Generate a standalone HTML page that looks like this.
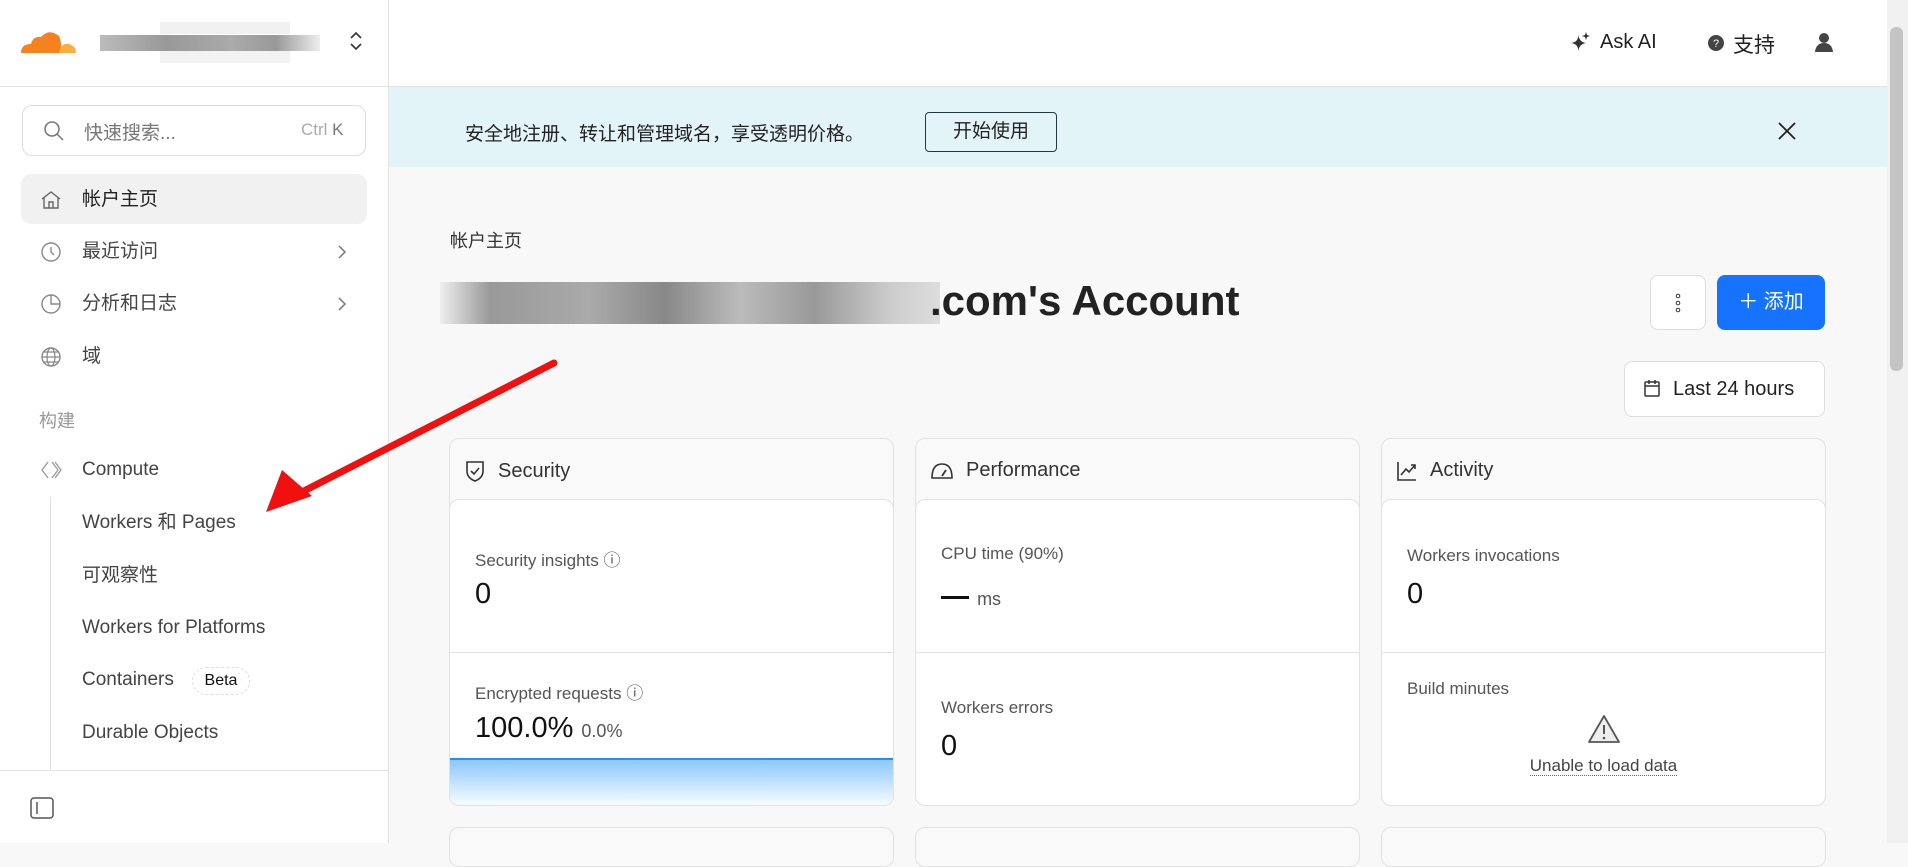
<!DOCTYPE html>
<html><head><meta charset="utf-8">
<style>
*{box-sizing:border-box;margin:0;padding:0}
body{width:1908px;height:843px;overflow:hidden;background:#f8f8f8;font-family:"Liberation Sans","Noto Sans CJK SC",sans-serif;color:#222;position:relative}
.abs{position:absolute}
#side{left:0;top:0;width:389px;height:843px;background:#fff;border-right:1px solid #e3e3e3}
#top{left:389px;top:0;width:1498px;height:87px;background:#fff;border-bottom:1px solid #e3e3e3}
.nav{position:absolute;left:82px;font-size:19px;color:#444;line-height:24px}
.ico{position:absolute;left:40px}
.card{position:absolute;top:438px;width:445px;height:368px;background:#f9f9f9;border:1px solid #e2e2e2;border-radius:10px}
.card .h{position:absolute;left:14px;top:20px;font-size:20px;color:#333;display:flex;align-items:center;gap:12px}
.card .b{position:absolute;left:-1px;right:-1px;top:60px;bottom:-1px;background:#fff;border:1px solid #e2e2e2;border-radius:10px;overflow:hidden}
.lbl{position:absolute;left:25px;font-size:17px;color:#555}
.num{position:absolute;left:25px;font-size:29px;color:#111}
.div{position:absolute;left:0;right:0;top:152px;border-top:1px solid #e2e2e2}
.card2{position:absolute;top:827px;width:445px;height:40px;background:#f9f9f9;border:1px solid #e2e2e2;border-radius:10px}
</style></head><body>
<div id="side" class="abs">
  <svg class="abs" style="left:19px;top:28px" width="58" height="28" viewBox="0 0 58 28"><path d="M2 25 Q2 16 12 16 Q14 8 22 9 Q30 0 40 8 Q43 14 42 25Z" fill="#f6821f"/><path d="M40 25 Q42 14 50 16 Q57 18 57 25Z" fill="#fbad41"/></svg>
  <div class="abs" style="left:100px;top:35px;width:220px;height:16px;background:linear-gradient(90deg,#bbb,#999 30%,#aaa 60%,#999 80%,#eee)"></div>
  <div class="abs" style="left:160px;top:22px;width:130px;height:12px;background:#f0f0f0"></div>
  <div class="abs" style="left:160px;top:51px;width:130px;height:12px;background:#f2f2f2"></div>
  <svg class="abs" style="left:348px;top:30px" width="16" height="22" viewBox="0 0 16 22"><path d="M3 8l5-5 5 5M3 14l5 5 5-5" fill="none" stroke="#333" stroke-width="1.6"/></svg>
  <div class="abs" style="left:0;top:86px;width:389px;border-top:1px solid #e3e3e3"></div>
  <div class="abs" style="left:22px;top:105px;width:344px;height:51px;border:1.5px solid #ddd;border-radius:10px"></div>
  <svg class="abs" style="left:43px;top:120px" width="22" height="22" viewBox="0 0 22 22"><circle cx="9" cy="9" r="7" fill="none" stroke="#777" stroke-width="1.5"/><path d="M14 14l6 6" stroke="#777" stroke-width="1.5"/></svg>
  <div class="abs" style="left:84px;top:118px;font-size:19px;color:#777">快速搜索...</div>
  <div class="abs" style="left:301px;top:120px;font-size:17px;color:#aaa">Ctrl <span style="color:#777">K</span></div>
  <div class="abs" style="left:21px;top:174px;width:346px;height:50px;background:#f1f1f1;border-radius:10px"></div>
  <svg class="ico" style="top:189px" width="22" height="22" viewBox="0 0 22 22"><path d="M2 10L11 3l9 7M4 9v10h14V9M9 19v-6h4v6" fill="none" stroke="#666" stroke-width="1.4"/></svg>
  <div class="nav" style="top:188px;color:#222">帐户主页</div>
  <svg class="ico" style="top:241px" width="22" height="22" viewBox="0 0 22 22"><circle cx="11" cy="11" r="9" fill="none" stroke="#888" stroke-width="1.4"/><path d="M11 6v5l3 3" fill="none" stroke="#888" stroke-width="1.4"/></svg>
  <div class="nav" style="top:240px">最近访问</div>
  <svg class="abs" style="left:336px;top:244px" width="12" height="16"><path d="M3 2l6 6-6 6" fill="none" stroke="#777" stroke-width="1.5"/></svg>
  <svg class="ico" style="top:293px" width="22" height="22" viewBox="0 0 22 22"><circle cx="11" cy="11" r="9" fill="none" stroke="#888" stroke-width="1.4"/><path d="M11 2v9h9" fill="none" stroke="#888" stroke-width="1.4"/></svg>
  <div class="nav" style="top:292px">分析和日志</div>
  <svg class="abs" style="left:336px;top:296px" width="12" height="16"><path d="M3 2l6 6-6 6" fill="none" stroke="#777" stroke-width="1.5"/></svg>
  <svg class="ico" style="top:346px" width="22" height="22" viewBox="0 0 22 22"><circle cx="11" cy="11" r="9" fill="none" stroke="#888" stroke-width="1.4"/><ellipse cx="11" cy="11" rx="4" ry="9" fill="none" stroke="#888" stroke-width="1.2"/><path d="M2 11h18M4 6h14M4 16h14" stroke="#888" stroke-width="1.2"/></svg>
  <div class="nav" style="top:345px">域</div>
  <div class="abs" style="left:39px;top:407px;font-size:18px;color:#999">构建</div>
  <svg class="ico" style="top:459px" width="22" height="22" viewBox="0 0 22 22"><path d="M8 3L2 11l6 8M12 3l6 8-6 8M15 3l6 8-6 8" fill="none" stroke="#999" stroke-width="1.3"/></svg>
  <div class="nav" style="top:458px">Compute</div>
  <div class="abs" style="left:50px;top:497px;height:273px;border-left:1px solid #ddd"></div>
  <div class="nav" style="top:511px">Workers 和 Pages</div>
  <div class="nav" style="top:564px">可观察性</div>
  <div class="nav" style="top:616px">Workers for Platforms</div>
  <div class="nav" style="top:668px">Containers</div>
  <div class="abs" style="left:192px;top:667px;width:58px;height:28px;border:1px dashed #ddd;border-radius:14px;font-size:16px;color:#111;text-align:center;line-height:26px">Beta</div>
  <div class="nav" style="top:721px">Durable Objects</div>
  <div class="abs" style="left:0;top:770px;width:389px;border-top:1px solid #e3e3e3"></div>
  <svg class="abs" style="left:30px;top:797px" width="24" height="22" viewBox="0 0 24 22"><rect x="1" y="1" width="22" height="20" rx="3" fill="none" stroke="#555" stroke-width="1.5"/><path d="M7 5v12" stroke="#555" stroke-width="1.5"/></svg>
</div>
<div id="top" class="abs">
  <svg class="abs" style="left:1179px;top:30px" width="24" height="24" viewBox="0 0 24 24"><path d="M10 4Q11 12 3 13Q11 14 10 22Q11 14 18 13Q11 12 10 4Z" fill="#333"/><path d="M18 2l1 3 3 1-3 1-1 3-1-3-3-1 3-1z" fill="#333"/></svg>
  <div class="abs" style="left:1211px;top:31px;font-size:20px;color:#222">Ask AI</div>
  <svg class="abs" style="left:1318px;top:34px" width="18" height="18"><circle cx="9" cy="9" r="8" fill="#444"/><text x="9" y="13" font-size="11" fill="#fff" text-anchor="middle" font-family="Liberation Sans">?</text></svg>
  <div class="abs" style="left:1344px;top:29px;font-size:21px;color:#222">支持</div>
  <svg class="abs" style="left:1425px;top:31px" width="20" height="22" viewBox="0 0 20 22"><circle cx="10" cy="7" r="5" fill="#444"/><path d="M1 21Q2 12 10 12Q18 12 19 21Z" fill="#444"/></svg>
</div>
<div class="abs" style="left:389px;top:87px;width:1498px;height:80px;background:#e3f4f9"></div>
<div class="abs" style="left:465px;top:119px;font-size:19px;color:#222">安全地注册、转让和管理域名，享受透明价格。</div>
<div class="abs" style="left:925px;top:112px;width:132px;height:40px;border:1.5px solid #1e3a44;border-radius:4px;font-size:19px;text-align:center;line-height:37px;color:#222">开始使用</div>
<svg class="abs" style="left:1777px;top:121px" width="20" height="20"><path d="M2 2l16 16M18 2L2 18" stroke="#222" stroke-width="1.8"/></svg>
<div class="abs" style="left:1887px;top:0;width:21px;height:843px;background:#f1f1f1"></div>
<div class="abs" style="left:1890px;top:27px;width:13px;height:344px;background:#c4c4c4;border-radius:6px"></div>

<div class="abs" style="left:450px;top:227px;font-size:18px;color:#333">帐户主页</div>
<div class="abs" style="left:440px;top:282px;width:500px;height:42px;background:linear-gradient(90deg,#eee,#999 10%,#aaa 30%,#888 45%,#bbb 60%,#999 75%,#ccc 90%,#ddd)"></div>
<div class="abs" style="left:930px;top:277px;font-size:42px;font-weight:bold;color:#222">.com's Account</div>
<div class="abs" style="left:1650px;top:275px;width:56px;height:55px;background:#fff;border:1px solid #ddd;border-radius:8px"></div>
<svg class="abs" style="left:1674px;top:292px" width="8" height="22"><circle cx="4" cy="4" r="1.8" fill="none" stroke="#333"/><circle cx="4" cy="11" r="1.8" fill="none" stroke="#333"/><circle cx="4" cy="18" r="1.8" fill="none" stroke="#333"/></svg>
<div class="abs" style="left:1717px;top:275px;width:108px;height:55px;background:#1673ff;border-radius:8px;color:#fff;font-size:20px;line-height:55px;text-align:center">＋ 添加</div>
<div class="abs" style="left:1624px;top:361px;width:201px;height:56px;background:#fff;border:1px solid #ddd;border-radius:8px;font-size:20px;line-height:54px;padding-left:48px;color:#222">Last 24 hours</div>
<svg class="abs" style="left:1644px;top:379px" width="16" height="18" viewBox="0 0 16 18"><rect x="1" y="3" width="14" height="14" rx="1" fill="none" stroke="#333" stroke-width="1.5"/><path d="M1 7h14M5 1v4M11 1v4" stroke="#333" stroke-width="1.5"/></svg>

<div class="card" style="left:449px">
  <div class="h"><svg width="22" height="24" viewBox="0 0 22 24"><path d="M3 3h16v9q0 7-8 10Q3 19 3 12Z" fill="none" stroke="#333" stroke-width="1.6"/><path d="M7 12l3 3 5-6" fill="none" stroke="#333" stroke-width="1.6"/></svg>Security</div>
  <div class="b">
    <div class="lbl" style="top:46px">Security insights ⓘ</div>
    <div class="num" style="top:78px">0</div>
    <div class="div"></div>
    <div class="lbl" style="top:179px">Encrypted requests ⓘ</div>
    <div class="num" style="top:212px">100.0% <span style="font-size:18px;color:#555">0.0%</span></div>
    <div class="abs" style="left:0;right:0;top:258px;height:50px;border-top:2px solid #2a8cf0;background:linear-gradient(#8cc8ff,#fff)"></div>
  </div>
</div>
<div class="card" style="left:915px">
  <div class="h"><svg width="24" height="22" viewBox="0 0 24 22"><path d="M2 18Q2 4 12 4Q22 4 22 18Z" fill="none" stroke="#333" stroke-width="1.6"/><path d="M12 16l4-6" stroke="#333" stroke-width="1.8"/></svg>Performance</div>
  <div class="b">
    <div class="lbl" style="top:44px">CPU time (90%)</div>
    <div class="num" style="top:80px"><span style="display:inline-block;width:28px;border-top:3px solid #111;vertical-align:middle"></span> <span style="font-size:18px;color:#555">ms</span></div>
    <div class="div"></div>
    <div class="lbl" style="top:198px">Workers errors</div>
    <div class="num" style="top:230px">0</div>
  </div>
</div>
<div class="card" style="left:1381px">
  <div class="h"><svg width="22" height="22" viewBox="0 0 22 22"><path d="M2 2v18h18" fill="none" stroke="#333" stroke-width="1.6"/><path d="M5 15l5-6 3 3 6-7M15 5h4v4" fill="none" stroke="#333" stroke-width="1.6"/></svg>Activity</div>
  <div class="b">
    <div class="lbl" style="top:46px">Workers invocations</div>
    <div class="num" style="top:78px">0</div>
    <div class="div"></div>
    <div class="lbl" style="top:179px">Build minutes</div>
    <svg class="abs" style="left:205px;top:214px" width="34" height="30" viewBox="0 0 34 30"><path d="M17 2L32 28H2Z" fill="#eee" stroke="#555" stroke-width="1.8" stroke-linejoin="round"/><path d="M17 11v9" stroke="#555" stroke-width="2"/><circle cx="17" cy="24" r="1.3" fill="#555"/></svg>
    <div class="abs" style="left:0;right:0;top:256px;text-align:center;font-size:17px;color:#444"><span style="border-bottom:1px dotted #666">Unable to load data</span></div>
  </div>
</div>
<div class="card2" style="left:449px"></div>
<div class="card2" style="left:915px"></div>
<div class="card2" style="left:1381px"></div>

<svg class="abs" style="left:0;top:0" width="1908" height="843"><path d="M554 363L300 493" stroke="#f01010" stroke-width="7" stroke-linecap="round"/><path d="M266 512L282 470 312 496Z" fill="#f01010"/></svg>
</body></html>
